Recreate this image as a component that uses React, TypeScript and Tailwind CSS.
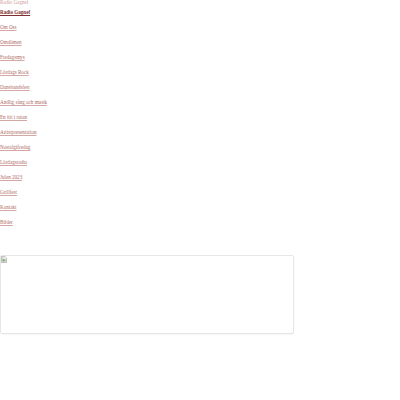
import * as React from 'react'

const links = [
  'Om Oss',
  'Omdömen',
  'Fredagsmys',
  'Lördags Rock',
  'Dansbandsfest',
  'Andlig sång och musik',
  'En titt i rutan',
  'Artistpresentation',
  'Nostalgifredag',
  'Lördagsradio',
  'Julen 2023',
  'Grillfest',
  'Kontakt',
  'Bilder',
]

function BrokenImage() {
  return (
    <svg width="6" height="7" viewBox="0 0 6 7" className="block">
      <path d="M0.5 0.5h3.5l1.5 1.5v4.5h-5z" fill="#f4f4f4" stroke="#9a9a9a" strokeWidth="0.6" />
      <rect x="1.2" y="3.2" width="3.4" height="2.4" fill="#8fb08a" />
      <circle cx="2" cy="2.2" r="0.6" fill="#c9a24a" />
    </svg>
  )
}

export default function App() {
  return (
    <div className="min-h-[400px] bg-white font-['Liberation_Serif',serif] text-[5.1px]">
      <p className="leading-[5px] text-[#cfa19d]">Radio Gagnef</p>
      <a href="#" className="mt-[5px] block w-fit font-bold leading-[5px] text-[#7f2f2f] underline">
        Radio Gagnef
      </a>
      <ul>
        {links.map((l) => (
          <li key={l} className="mt-[10px] leading-[5px]">
            <a href="#" className="text-[#ad6a66] underline decoration-[#d3a8a5]">
              {l}
            </a>
          </li>
        ))}
      </ul>
      <div className="mt-[30px] h-[79px] w-[294px] rounded-[2px] border border-[#e6e6e6] shadow-[0_1px_2px_rgba(0,0,0,0.04)]">
        <BrokenImage />
      </div>
    </div>
  )
}
